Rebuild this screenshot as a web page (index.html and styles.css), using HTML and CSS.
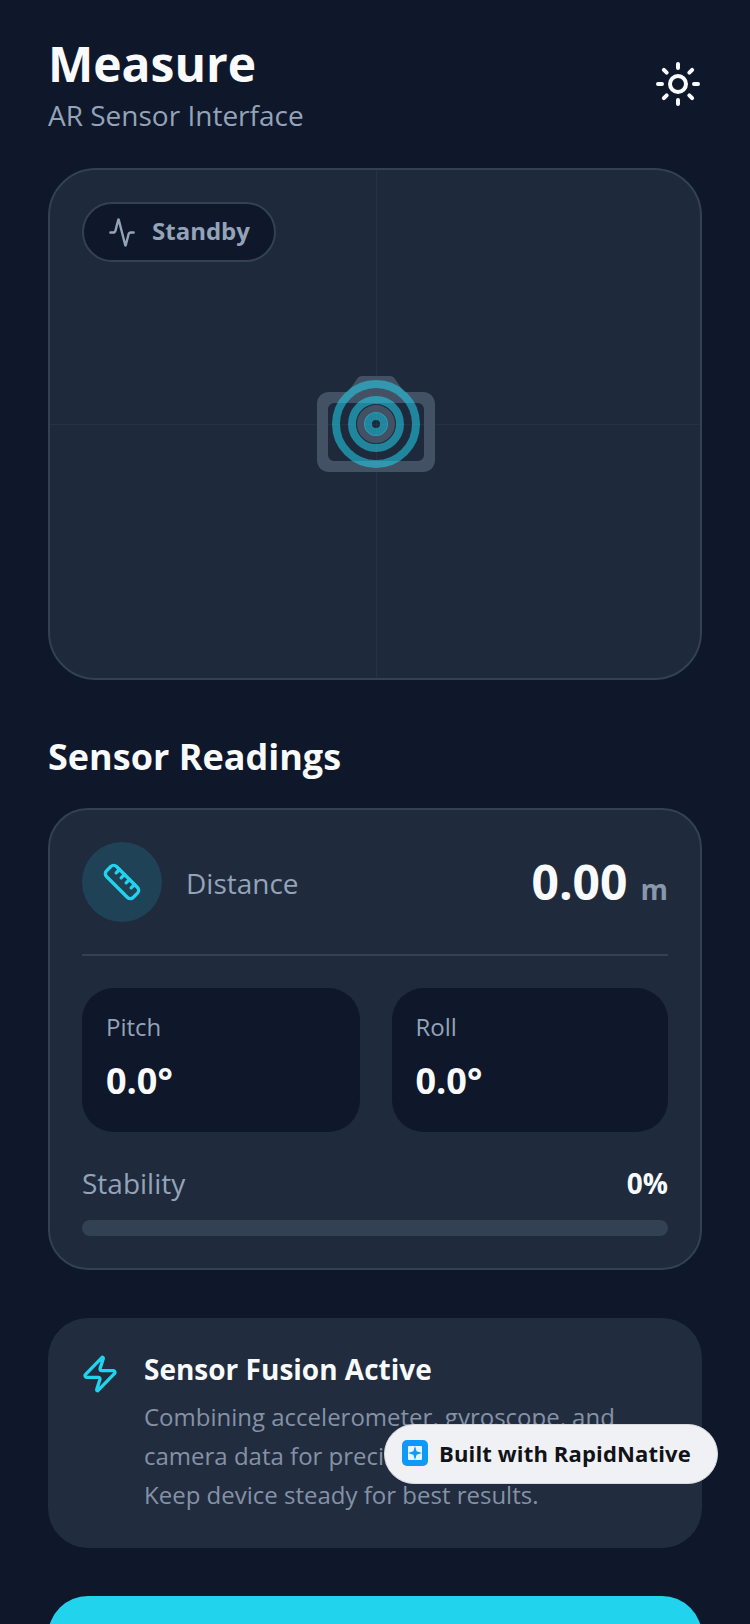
FILE: index.html
```html
<!DOCTYPE html>
<html lang="en">
<head>
<meta charset="utf-8">
<title>Measure</title>
<link rel="stylesheet" href="styles.css">
</head>
<body>
<main class="screen">
  <header class="header">
    <div>
      <h1 class="title">Measure</h1>
      <p class="subtitle">AR Sensor Interface</p>
    </div>
    <svg class="sun" viewBox="0 0 24 24" fill="none" stroke="#f8fafc" stroke-width="2" stroke-linecap="round" stroke-linejoin="round"><circle cx="12" cy="12" r="4"/><path d="M12 2v2M12 20v2M4.93 4.93l1.41 1.41M17.66 17.66l1.41 1.41M2 12h2M20 12h2M6.34 17.66l-1.41 1.41M19.07 4.93l-1.41 1.41"/></svg>
  </header>

  <section class="viewport">
    <div class="line-v"></div>
    <div class="line-h"></div>
    <div class="pill">
      <svg class="pulse" viewBox="0 0 24 24" preserveAspectRatio="none" fill="none" stroke="#94a3b8" stroke-width="2" stroke-linecap="round" stroke-linejoin="round"><path d="M22 12h-2.48a2 2 0 0 0-1.93 1.46l-2.35 8.36a.25.25 0 0 1-.48 0L9.24 2.18a.25.25 0 0 0-.48 0l-2.35 8.36A2 2 0 0 1 4.49 12H2"/></svg>
      <span>Standby</span>
    </div>
    <svg class="camera" viewBox="0 0 118 96"><path fill-rule="evenodd" d="M52 0h21c2 0 4 1 5 3l9 13h19c7 0 12 5 12 12v56c0 7-5 12-12 12H12C5 96 0 91 0 84V28c0-7 5-12 12-12h19l9-13c1-2 3-3 5-3zM17 27c-3 0-6 3-6 6v46c0 3 3 6 6 6h84c3 0 6-3 6-6V33c0-3-3-6-6-6z"/></svg>
    <svg class="lens" viewBox="0 0 44 44" fill="none"><circle cx="22" cy="22" r="15"/></svg>
    <svg class="rings" viewBox="0 0 88 88" fill="none">
      <circle cx="44" cy="44" r="40" stroke-width="8"/>
      <circle cx="44" cy="44" r="24" stroke-width="8"/>
      <circle cx="44" cy="44" r="8" stroke-width="8"/>
    </svg>
  </section>

  <h2 class="section-title">Sensor Readings</h2>

  <section class="card">
    <div class="distance">
      <div class="icon-circle">
        <svg viewBox="0 0 24 24" fill="none" stroke="#22d3ee" stroke-width="2" stroke-linecap="round" stroke-linejoin="round"><path d="M21.3 15.3a2.4 2.4 0 0 1 0 3.4l-2.6 2.6a2.4 2.4 0 0 1-3.4 0L2.7 8.7a2.41 2.41 0 0 1 0-3.4l2.6-2.6a2.41 2.41 0 0 1 3.4 0Z"/><path d="m14.5 12.5 2-2M11.5 9.5l2-2M8.5 6.5l2-2M17.5 15.5l2-2"/></svg>
      </div>
      <span class="label">Distance</span>
      <div class="value"><strong>0.00</strong><span>m</span></div>
    </div>
    <div class="angles">
      <div class="angle"><span>Pitch</span><strong>0.0°</strong></div>
      <div class="angle"><span>Roll</span><strong>0.0°</strong></div>
    </div>
    <div class="stability"><span>Stability</span><strong>0%</strong></div>
    <div class="bar"></div>
  </section>

  <section class="info">
    <svg class="bolt" viewBox="0 0 24 24" fill="none" stroke="#22d3ee" stroke-width="2" stroke-linecap="round" stroke-linejoin="round"><path d="M4 14a1 1 0 0 1-.78-1.63l9.9-10.2a.5.5 0 0 1 .86.46l-1.92 6.02A1 1 0 0 0 13 10h7a1 1 0 0 1 .78 1.63l-9.9 10.2a.5.5 0 0 1-.86-.46l1.92-6.02A1 1 0 0 0 11 14z"/></svg>
    <div>
      <h3 class="info-title">Sensor Fusion Active</h3>
      <p class="info-text">Combining accelerometer, gyroscope, and camera data for precise measurements.<br>Keep device steady for best results.</p>
    </div>
  </section>

  <div class="cta"></div>
</main>

<div class="badge">
  <svg class="badge-logo" viewBox="0 0 26 26"><rect width="26" height="26" rx="5" fill="#1199fa"/><rect x="6" y="6" width="14" height="14" rx="1" fill="#e8f5ff"/><path d="M13 6l1.6 5.2L20 13l-5.4 1.8L13 20l-1.6-5.2L6 13l5.4-1.8z" fill="#1199fa"/></svg>
  <span>Built with RapidNative</span>
</div>
</body>
</html>
```

FILE: styles.css
```css
* { box-sizing: border-box; margin: 0; padding: 0; }
html, body { height: 1624px; overflow: hidden; }
body { background: #0f172a; font-family: "Open Sans", sans-serif; color: #f8fafc; }
.screen { padding: 32px 48px 0; display: flex; flex-direction: column; }

.header { display: flex; justify-content: space-between; align-items: flex-start; height: 104px; margin-bottom: 32px; }
.title { font-size: 48px; line-height: 64px; font-weight: 700; }
.subtitle { font-size: 28px; line-height: 38px; color: #94a3b8; }
.sun { width: 48px; height: 48px; margin-top: 28px; }

.viewport { position: relative; height: 512px; background: #1e293b; border: 2px solid #334155; border-radius: 48px; padding: 32px; overflow: hidden; }
.line-v { position: absolute; left: calc(50% + 1px); top: 0; bottom: 0; width: 1px; background: #334155; opacity: .35; }
.line-h { position: absolute; top: 50%; left: 0; right: 0; height: 1px; background: #334155; opacity: .35; }
.pill { position: relative; display: inline-flex; align-items: center; gap: 16px; height: 60px; padding: 0 24px; background: #0f172a; border: 2px solid #334155; border-radius: 30px; font-size: 24px; line-height: 30px; font-weight: 700; color: #94a3b8; }
.pill span { margin-top: -3px; }
.pulse { width: 28px; height: 31px; }
.camera { position: absolute; left: calc(50% - 58px); top: calc(50% - 48px); width: 118px; height: 96px; fill: #475569; fill-opacity: .9; }
.lens { position: absolute; left: calc(50% - 21px); top: calc(50% - 22px); width: 44px; height: 44px; stroke: #475569; stroke-opacity: .9; stroke-width: 8; }
.rings { position: absolute; left: calc(50% - 43px); top: calc(50% - 44px); width: 88px; height: 88px; stroke: #22d3ee; stroke-opacity: .55; }

.section-title { font-size: 36px; line-height: 48px; font-weight: 700; margin: 53px 0 27px; }

.card { background: #1f2a3c; border: 2px solid #334155; border-radius: 40px; padding: 32px; }
.distance { display: flex; align-items: center; gap: 24px; padding-bottom: 32px; border-bottom: 2px solid #334155; }
.icon-circle { width: 80px; height: 80px; border-radius: 50%; background: rgba(34, 211, 238, .15); display: flex; align-items: center; justify-content: center; }
.icon-circle svg { width: 40px; height: 40px; }
.label { font-size: 28px; line-height: 40px; color: #94a3b8; flex: 1; margin-top: 2px; }
.value { display: flex; align-items: baseline; gap: 13px; }
.value strong { font-size: 48px; line-height: 64px; font-weight: 700; }
.value span { font-size: 28px; font-weight: 700; color: #8a97aa; }

.angles { display: grid; grid-template-columns: 277.5fr 276.5fr; gap: 32px; margin-top: 32px; }
.angle { height: 144px; background: #0f172a; border-radius: 32px; padding: 23px 24px; display: flex; flex-direction: column; gap: 14px; }
.angle span { font-size: 24px; line-height: 32px; color: #94a3b8; }
.angle strong { font-size: 36px; line-height: 48px; font-weight: 700; }

.stability { display: flex; justify-content: space-between; align-items: center; margin-top: 31px; height: 40px; }
.stability span { font-size: 28px; color: #94a3b8; }
.stability strong { font-size: 28px; font-weight: 700; }
.bar { height: 16px; margin-top: 17px; background: #334155; border-radius: 8px; }

.info { display: flex; gap: 24px; margin-top: 48px; background: #222c3f; border-radius: 40px; padding: 31px 32px 32px; height: 230px; }
.bolt { width: 40px; height: 40px; flex: none; margin-top: 5px; }
.info-title { font-size: 28px; line-height: 40px; font-weight: 700; }
.info-text { font-size: 24px; line-height: 39px; color: #8592a6; margin-top: 8px; }

.cta { height: 120px; margin-top: 48px; background: #22d3ee; border-radius: 40px; }

.badge { position: fixed; left: 384px; top: 1424px; width: 334px; height: 60px; display: flex; align-items: center; gap: 11px; padding: 0 17px; background: #f0f1f4; border: 1px solid #d8dae0; border-radius: 30px; font-size: 22px; letter-spacing: .15px; font-weight: 700; color: #111318; white-space: nowrap; }
.badge span { margin-top: -2px; }
.badge-logo { width: 26px; height: 26px; flex: none; margin-top: -2px; }
```
